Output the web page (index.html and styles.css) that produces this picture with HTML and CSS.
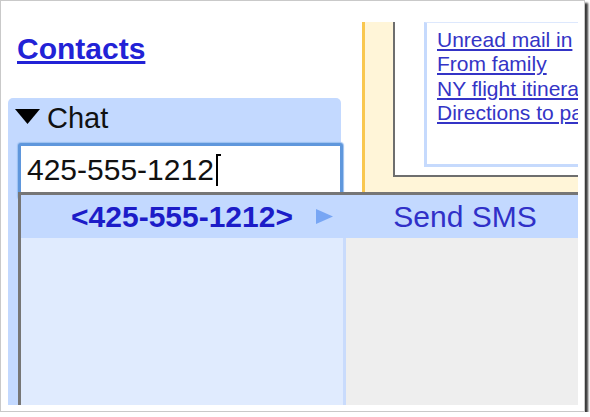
FILE: index.html
```html
<!DOCTYPE html>
<html lang="en">
<head>
  <meta charset="UTF-8">
  <title>Chat SMS</title>
  <link rel="stylesheet" href="styles.css">
</head>
<body>
  <div class="frame">
    <div class="screen">

      <div class="left-col">
        <a class="contacts" href="#">Contacts</a>

        <div class="chat-panel">
          <div class="chat-head">
            <svg class="chat-toggle" width="25" height="15" viewBox="0 0 25 15"><polygon points="0,0 25,0 12.5,15" fill="#000"/></svg>
            <span>Chat</span>
          </div>
          <div class="chat-input">425-555-1212<span class="caret"></span></div>
        </div>
      </div>

      <div class="right-col">
        <div class="yellow-box">
          <div class="grey-box">
            <div class="link-box">
              <a href="#">Unread mail in</a>
              <a href="#">From family</a>
              <a href="#">NY flight itinera</a>
              <a href="#">Directions to pa</a>
            </div>
          </div>
        </div>
      </div>

      <div class="menu">
        <div class="menu-row">
          <div class="menu-num">
            <span>&lt;425-555-1212&gt;</span>
            <svg class="menu-arrow" width="17" height="15" viewBox="0 0 17 15"><polygon points="0,0 17,7.5 0,15" fill="#78a6f4"/></svg>
          </div>
          <div class="menu-action">Send SMS</div>
        </div>
        <div class="menu-fill-left"></div>
        <div class="menu-fill-right"></div>
      </div>

    </div>
  </div>
</body>
</html>
```

FILE: styles.css
```css
* { margin: 0; padding: 0; box-sizing: border-box; }
body { background: #fff; font-family: "Liberation Sans", Arial, sans-serif; }
.frame { width: 585px; height: 412px; border: 1px solid #c9c9c9; padding: 6px; background: #fff; box-shadow: 3px 3px 2px #3a3a3a; }
.screen { position: relative; width: 571px; height: 398px; overflow: hidden; background: #fff; display: flex; }

.left-col { width: 334px; padding-left: 1px; display: flex; flex-direction: column; flex-shrink: 0; }
.contacts { margin: 25px 0 0 9px; font-size: 30px; font-weight: 700; line-height: 34px; color: #2222d6; text-decoration: underline; align-self: flex-start; }
.chat-panel { flex: 1; margin-top: 32px; background: #c3d9ff; border-radius: 5px 5px 0 0; }
.chat-head { display: flex; align-items: center; gap: 7px; height: 36px; padding: 4px 0 0 7px; font-size: 29px; line-height: 32px; color: #111; }
.chat-toggle { margin-top: -3px; }
.chat-input { width: 325px; height: 56px; margin: 9px 0 0 10px; padding: 4px 0 0 6px; background: #fff; border: 3px solid #5f97dc; border-radius: 3px; box-shadow: 0 0 1px 1px #9cc0f0; font-size: 30px; line-height: 40px; color: #111; }
.caret { display: inline-block; position: relative; width: 2px; height: 32px; margin-left: 2px; vertical-align: -6px; background: #000; }
.caret::before { content: ""; position: absolute; top: 0; left: 2px; width: 3px; height: 2px; background: #000; }

.right-col { flex: 1; margin-left: 21px; padding-top: 15px; overflow: hidden; }
.yellow-box { height: 178px; border-left: 3px solid #f9c74f; background: #fff5d8; padding-left: 28px; overflow: hidden; }
.grey-box { width: 320px; height: 155px; background: #fff; border-left: 2px solid #6e6e6e; border-bottom: 2px solid #6e6e6e; padding-left: 29px; }
.link-box { height: 145px; background: #fff; border: 3px solid #c6dafd; border-top: 1px solid #dde8fd; border-right: none; padding: 4.5px 0 0 10px; }
.link-box a { display: block; white-space: nowrap; font-size: 21px; line-height: 24.5px; color: #3434c6; text-decoration: underline; }

.menu { position: absolute; left: 11px; top: 185px; width: 570px; bottom: 0; border-top: 3px solid #767676; border-left: 3px solid #767676; display: grid; grid-template-columns: 325px 1fr; grid-template-rows: 43px 1fr; }
.menu-row { grid-column: 1 / -1; display: grid; grid-template-columns: 325px 1fr; background: #c3d9ff; font-size: 30px; line-height: 43px; }
.menu-num { display: flex; align-items: center; }
.menu-num span { flex: 1; padding-left: 27px; text-align: center; font-weight: 700; color: #1c1cc8; }
.menu-arrow { margin-right: 13px; }
.menu-action { padding-left: 6px; text-align: center; color: #3030c8; width: 232px; }
.menu-fill-left { background: #e0ebfe; border-right: 3px solid #c9dbfc; }
.menu-fill-right { background: #eee; }
```
